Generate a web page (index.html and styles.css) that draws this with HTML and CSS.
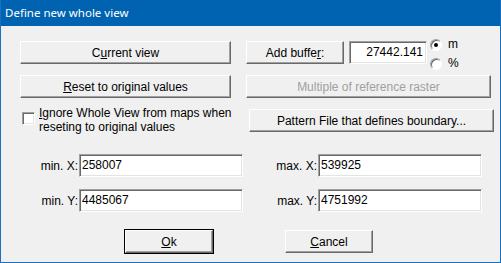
FILE: index.html
```html
<!DOCTYPE html>
<html>
<head>
<meta charset="utf-8">
<link rel="stylesheet" href="styles.css">
</head>
<body>
<div class="window">
  <div class="titlebar">Define new whole view</div>
  <div class="content">
    <div class="row row1">
      <div class="btn wide">C<u>u</u>rrent view</div>
      <div class="rightgroup">
        <div class="btn buffer">Add buffe<u>r</u>:</div>
        <div class="field buffer-field">27442.141</div>
        <div class="radios">
          <div class="radio-item"><span class="radio checked"></span><span class="rlabel">m</span></div>
          <div class="radio-item"><span class="radio"></span><span class="rlabel">%</span></div>
        </div>
      </div>
    </div>
    <div class="row row2">
      <div class="btn wide"><u>R</u>eset to original values</div>
      <div class="btn right disabled">Multiple of reference raster</div>
    </div>
    <div class="row row3">
      <div class="check">
        <span class="checkbox"></span>
        <span class="check-text"><span class="cline"><u>I</u>gnore Whole View from maps when</span><span class="cline">reseting to original values</span></span>
      </div>
      <div class="btn right">Pattern File that defines boundary...</div>
    </div>
    <div class="row row4">
      <div class="pair left-pair"><span class="lbl">min. X:</span><div class="field">258007</div></div>
      <div class="pair right-pair"><span class="lbl">max. X:</span><div class="field">539925</div></div>
    </div>
    <div class="row row5">
      <div class="pair left-pair"><span class="lbl">min. Y:</span><div class="field">4485067</div></div>
      <div class="pair right-pair"><span class="lbl">max. Y:</span><div class="field">4751992</div></div>
    </div>
    <div class="row row6">
      <div class="btn small default"><u>O</u>k</div>
      <div class="btn small"><u>C</u>ancel</div>
    </div>
  </div>
</div>
</body>
</html>
```
FILE: styles.css
```css
html, body {
  margin: 0;
  padding: 0;
  background: #f0f0f0;
}
.window {
  width: 501px;
  height: 263px;
  box-sizing: border-box;
  border: 1px solid #1a6fbf;
  border-top: none;
  background: #f0f0f0;
  font-family: "Liberation Sans", Arial, sans-serif;
  font-size: 12px;
  color: #000;
  overflow: hidden;
}
.titlebar {
  height: 26px;
  margin: 0 -1px;
  background: #0063b1;
  color: #fff;
  font-family: "Noto Sans", "Open Sans", sans-serif;
  font-size: 11.5px;
  line-height: 26px;
  padding-left: 5px;
}
.content {
  padding: 15px 0 0 19px;
}
.row {
  display: flex;
  height: 23px;
}
.row2 { margin-top: 11px; }
.row3 { margin-top: 11px; }
.row4 { margin-top: 22px; }
.row5 { margin-top: 12px; }
.row6 { margin-top: 18px; padding-left: 105px; gap: 72px; }

.btn {
  box-sizing: border-box;
  height: 23px;
  background: #f0f0f0;
  border-top: 1px solid #fff;
  border-left: 1px solid #fff;
  border-right: 1px solid #696969;
  border-bottom: 1px solid #696969;
  box-shadow: inset -1px -1px 0 #a0a0a0;
  display: flex;
  align-items: center;
  justify-content: center;
  white-space: nowrap;
  line-height: 14px;
}
.btn u { text-underline-offset: 1px; }
.wide { width: 211px; }
.right { width: 245px; margin-left: 15px; }
.disabled { color: #a0a0a0; }
.small { width: 88px; }
.default {
  outline: 1px solid #000;
  outline-offset: 0;
}
.rightgroup {
  display: flex;
  margin-left: 15px;
  height: 23px;
}
.buffer { width: 98px; }
.field {
  box-sizing: border-box;
  height: 23px;
  background: #fff;
  border-top: 1px solid #a0a0a0;
  border-left: 1px solid #a0a0a0;
  border-right: 1px solid #fff;
  border-bottom: 1px solid #fff;
  box-shadow: inset 1px 1px 0 #696969, inset -1px -1px 0 #e3e3e3;
  padding: 0 3px 0 3px;
  line-height: 21px;
  white-space: nowrap;
}
.buffer-field {
  width: 78px;
  margin-left: 5px;
  text-align: right;
}
.radios {
  display: flex;
  flex-direction: column;
  margin-left: 3px;
  margin-top: -3px;
  gap: 6px;
}
.radio-item {
  display: flex;
  align-items: center;
  height: 13px;
}
.radio {
  box-sizing: border-box;
  width: 12px;
  height: 12px;
  border-radius: 50%;
  background: #fff;
  border: 1px solid;
  border-color: #a0a0a0 #fff #fff #a0a0a0;
  box-shadow: inset 1px 1px 0 #696969;
  position: relative;
}
.radio.checked::after {
  content: "";
  position: absolute;
  left: 3px;
  top: 3px;
  width: 4px;
  height: 4px;
  border-radius: 50%;
  background: #000;
}
.rlabel {
  margin-left: 6px;
  line-height: 13px;
}
.check {
  width: 226px;
  display: flex;
  align-items: flex-start;
  margin-left: 2px;
  margin-top: -3px;
}
.checkbox {
  box-sizing: border-box;
  flex: none;
  width: 13px;
  height: 13px;
  margin-top: 6px;
  background: #fff;
  border: 1px solid;
  border-color: #a0a0a0 #fff #fff #a0a0a0;
  box-shadow: inset 1px 1px 0 #696969, inset -1px -1px 0 #e3e3e3;
}
.check-text {
  display: flex;
  flex-direction: column;
  margin-left: 4px;
}
.cline {
  display: block;
  height: 14px;
  line-height: 14px;
  white-space: nowrap;
}
.row3 .right { margin-left: 1px; }
.pair {
  display: flex;
  align-items: center;
}
.lbl {
  text-align: right;
  padding-right: 1px;
  box-sizing: border-box;
  white-space: nowrap;
}
.left-pair .lbl { width: 59px; }
.right-pair .lbl { width: 71px; margin-left: 4px; }
.pair .field { width: 164px; padding-left: 2px; }
```
